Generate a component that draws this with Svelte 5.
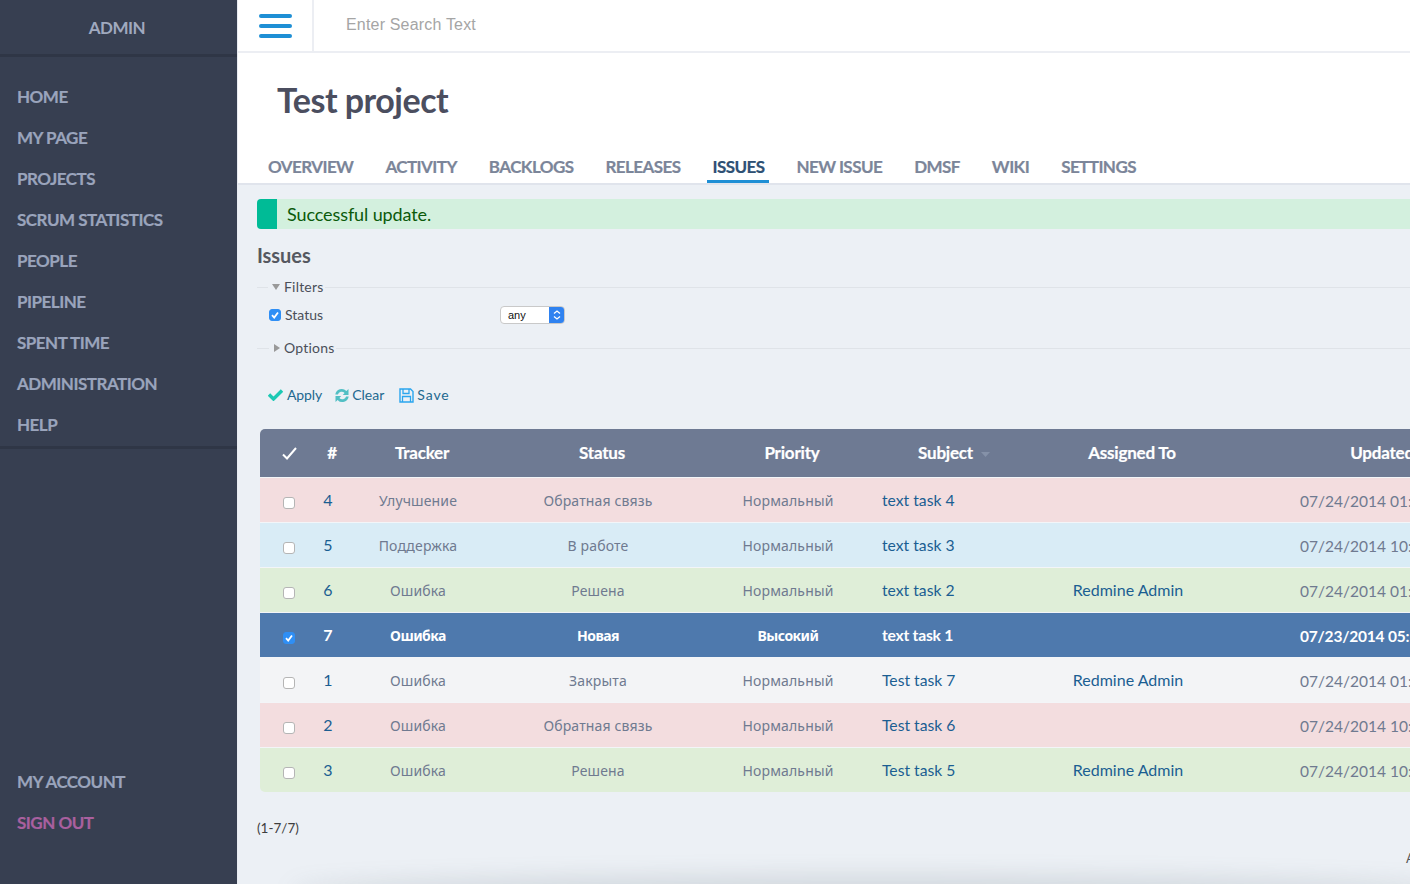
<script>
  const nav = ['Home', 'My page', 'Projects', 'Scrum statistics', 'People', 'Pipeline', 'Spent time', 'Administration', 'Help'];
  const tabs = ['Overview', 'Activity', 'Backlogs', 'Releases', 'Issues', 'New issue', 'DMSF', 'Wiki', 'Settings'];
  const rows = [
    { id: 4, tracker: 'Улучшение', status: 'Обратная связь', priority: 'Нормальный', subject: 'text task 4', who: '', date: '07/24/2014 01:32 PM', tone: 'red' },
    { id: 5, tracker: 'Поддержка', status: 'В работе', priority: 'Нормальный', subject: 'text task 3', who: '', date: '07/24/2014 10:45 AM', tone: 'blue' },
    { id: 6, tracker: 'Ошибка', status: 'Решена', priority: 'Нормальный', subject: 'text task 2', who: 'Redmine Admin', date: '07/24/2014 01:32 PM', tone: 'green' },
    { id: 7, tracker: 'Ошибка', status: 'Новая', priority: 'Высокий', subject: 'text task 1', who: '', date: '07/23/2014 05:12 PM', tone: 'sel' },
    { id: 1, tracker: 'Ошибка', status: 'Закрыта', priority: 'Нормальный', subject: 'Test task 7', who: 'Redmine Admin', date: '07/24/2014 01:32 PM', tone: 'plain' },
    { id: 2, tracker: 'Ошибка', status: 'Обратная связь', priority: 'Нормальный', subject: 'Test task 6', who: '', date: '07/24/2014 10:45 AM', tone: 'red' },
    { id: 3, tracker: 'Ошибка', status: 'Решена', priority: 'Нормальный', subject: 'Test task 5', who: 'Redmine Admin', date: '07/24/2014 10:45 AM', tone: 'green' }
  ];
</script>

<div class="page">
  <aside class="side">
    <div class="brand">ADMIN</div>
    <nav class="primary">
      {#each nav as item}<a href="#top">{item}</a>{/each}
    </nav>
    <nav class="secondary">
      <a href="#top">My account</a>
      <a href="#top" class="out">Sign out</a>
    </nav>
  </aside>

  <main class="main">
    <header class="topbar">
      <div class="burger"><i></i><i></i><i></i></div>
      <div class="search">Enter Search Text</div>
    </header>

    <section class="project">
      <h1>Test project</h1>
      <div class="tabs">
        {#each tabs as t}<a href="#top" class:active={t === 'Issues'}>{t}</a>{/each}
      </div>
    </section>

    <section class="content">
      <div class="flash"><span>Successful update.</span></div>
      <h2>Issues</h2>

      <div class="legend filters">
        <b class="stub"></b><svg class="tri" width="8" height="6" viewBox="0 0 8 6"><path d="M0 0h8L4 6z" fill="#999"/></svg><span>Filters</span><b class="rule"></b>
      </div>
      <div class="filter-row">
        <span class="cb on"><svg width="10" height="10" viewBox="0 0 10 10"><path d="M2 5.2 4.2 7.5 8 2.5" fill="none" stroke="#fff" stroke-width="1.8"/></svg></span>
        <span class="flabel">Status</span>
        <div class="select"><span>any</span><em><svg width="8" height="12" viewBox="0 0 8 12"><path d="M1 4.5 4 2l3 2.5M1 7.5 4 10l3-2.5" fill="none" stroke="#fff" stroke-width="1.3"/></svg></em></div>
      </div>
      <div class="legend options">
        <b class="stub long"></b><svg class="tri" width="6" height="8" viewBox="0 0 6 8"><path d="M0 0l6 4-6 4z" fill="#999"/></svg><span>Options</span><b class="rule"></b>
      </div>

      <div class="actions">
        <a href="#top" class="apply">
          <svg width="15" height="12" viewBox="0 0 15 12"><path d="M1 5.5 5.5 10 14 1.5" fill="none" stroke="#1cc9b4" stroke-width="3.4"/></svg>Apply
        </a>
        <a href="#top" class="clear">
          <svg width="16" height="15" viewBox="0 0 15 15"><path d="M.8 6.5A6.4 6.4 0 0 1 11.9 3.1L14 1.1V6.9H8.3L10.1 5A3.9 3.9 0 0 0 3.4 6.5zM14.2 8.5A6.4 6.4 0 0 1 3.1 11.9L1 13.9V8.1H6.7L4.9 10A3.9 3.9 0 0 0 11.6 8.5z" fill="#52bfc4"/></svg>Clear
        </a>
        <a href="#top" class="save">
          <svg width="15" height="15" viewBox="0 0 15 15"><path d="M1 1h10.5L14 3.5V14H1z" fill="none" stroke="#2aa5ee" stroke-width="1.4"/><path d="M4 1v4.5h6V1M3.5 14V8.5h8V14" fill="none" stroke="#2aa5ee" stroke-width="1.3"/></svg>Save
        </a>
      </div>

      <table class="issues">
        <colgroup>
          <col class="c-check" /><col class="c-id" /><col class="c-tracker" /><col class="c-status" /><col class="c-priority" /><col class="c-subject" /><col class="c-who" /><col class="c-date" />
        </colgroup>
        <thead>
          <tr>
            <th class="h-check"><svg width="15" height="13" viewBox="0 0 15 13"><path d="M1 7.5 5 11.5 14 1" fill="none" stroke="#fff" stroke-width="2"/></svg></th>
            <th class="h-id">#</th>
            <th>Tracker</th>
            <th>Status</th>
            <th>Priority</th>
            <th class="h-subject">Subject<svg width="9" height="5" viewBox="0 0 9 5"><path d="M0 0h9L4.5 5z" fill="#8591a8"/></svg></th>
            <th>Assigned To</th>
            <th>Updated</th>
          </tr>
        </thead>
        <tbody>
          {#each rows as r}
            <tr class={r.tone}>
              <td class="d-check">
                {#if r.tone === 'sel'}
                  <span class="cb on"><svg width="10" height="10" viewBox="0 0 10 10"><path d="M2 5.2 4.2 7.5 8 2.5" fill="none" stroke="#fff" stroke-width="1.8"/></svg></span>
                {:else}
                  <span class="cb"></span>
                {/if}
              </td>
              <td class="d-id"><a href="#top">{r.id}</a></td>
              <td class="ru">{r.tracker}</td>
              <td class="ru">{r.status}</td>
              <td class="ru">{r.priority}</td>
              <td class="d-subject"><a href="#top">{r.subject}</a></td>
              <td class="d-who"><a href="#top">{r.who}</a></td>
              <td class="d-date">{r.date}</td>
            </tr>
          {/each}
        </tbody>
      </table>

      <div class="count">(1-7/7)</div>
      <div class="also">Also available in</div>
    </section>
    <div class="shade"></div>
  </main>
</div>

<style>
  :global(body) { margin: 0; background: #ecf0f5; }
  .page {
    display: flex;
    height: 884px;
    overflow: hidden;
    font-family: Lato, "Noto Sans", sans-serif;
  }
  a { text-decoration: none; }

  .side {
    flex: 0 0 237px;
    display: flex;
    flex-direction: column;
    background: #373f51;
  }
  .brand {
    height: 57px;
    box-sizing: border-box;
    padding-top: 17px;
    padding-right: 3px;
    text-align: center;
    font-size: 17px;
    line-height: 22px;
    font-weight: 700;
    letter-spacing: -0.5px;
    color: #a0a9bf;
    border-bottom: 3px solid #2f3646;
  }
  .primary {
    display: flex;
    flex-direction: column;
    padding: 20px 0 0;
    border-bottom: 3px solid #2f3646;
  }
  .side a {
    display: block;
    height: 41px;
    line-height: 40px;
    padding-left: 17px;
    font-size: 17px;
    font-weight: 700;
    letter-spacing: -0.5px;
    -webkit-text-stroke: 0.2px currentColor;
    text-transform: uppercase;
    color: #9aa4bc;
  }
  .secondary { margin-top: auto; padding-bottom: 40px; }
  .side a.out { color: #a9609f; }

  .main {
    position: relative;
    flex: 1;
    min-width: 0;
    overflow: hidden;
    border-left: 1px solid #e8ebf1;
  }
  .topbar {
    display: flex;
    height: 51px;
    background: #fff;
    border-bottom: 2px solid #eceef3;
  }
  .burger {
    width: 76px;
    box-sizing: border-box;
    padding: 14px 20px 0 21px;
    border-right: 2px solid #eceef3;
  }
  .burger i {
    display: block;
    height: 4px;
    margin-bottom: 6px;
    border-radius: 2px;
    background: #1e8fd5;
  }
  .search {
    padding: 16px 0 0 32px;
    font-family: "Liberation Sans", sans-serif;
    font-size: 16px;
    line-height: 18px;
    letter-spacing: 0.18px;
    color: #a5a5a5;
  }

  .project {
    height: 132px;
    box-sizing: border-box;
    padding: 26px 0 0 25px;
    background: #fff;
    border-bottom: 2px solid #e0e4ec;
  }
  h1 {
    margin: 0 0 0 14px;
    font-size: 34px;
    line-height: 42px;
    font-weight: 700;
    letter-spacing: -0.5px;
    color: #4b4e5f;
  }
  .tabs {
    display: flex;
    gap: 22px;
    margin-top: 32px;
  }
  .tabs a {
    height: 30px;
    box-sizing: border-box;
    padding: 3px 5px 0;
    font-size: 17px;
    line-height: 22px;
    font-weight: 700;
    letter-spacing: -0.57px;
    -webkit-text-stroke: 0.2px currentColor;
    text-transform: uppercase;
    color: #7b8599;
  }
  .tabs a.active {
    color: #2e5074;
    border-bottom: 3px solid #1e8fd5;
  }

  .content {
    padding: 14px 0 0 19px;
    background: #ecf0f5;
  }
  .flash {
    height: 30px;
    box-sizing: border-box;
    padding-left: 10px;
    border-left: 20px solid #00bb96;
    border-radius: 4px 0 0 4px;
    background: #d3f0de;
    font-size: 18px;
    line-height: 30px;
    letter-spacing: -0.1px;
    color: #0b5a0b;
  }
  h2 {
    margin: 13px 0 0;
    font-size: 20px;
    line-height: 26px;
    font-weight: 700;
    letter-spacing: -0.05px;
    color: #555860;
  }
  .legend {
    display: flex;
    align-items: center;
    font-size: 14px;
    line-height: 18px;
    letter-spacing: 0.2px;
    color: #4a4f59;
  }
  .filters { margin-top: 10px; }
  .options { margin-top: 12px; }
  .stub { width: 11px; height: 1px; background: #dfe3e8; margin-right: 4px; }
  .stub.long { width: 12px; margin-right: 5px; }
  .tri { margin-right: 4px; }
  .rule { flex: 1; height: 1px; background: #dfe3e8; margin-left: 2px; }

  .filter-row {
    display: flex;
    align-items: center;
    height: 24px;
    margin-top: 7px;
    padding-left: 12px;
    font-size: 14px;
    color: #4a4f59;
  }
  .flabel { margin-left: 4px; width: 215px; line-height: 22px; }
  .cb {
    display: inline-flex;
    align-items: center;
    justify-content: center;
    width: 10px;
    height: 10px;
    box-sizing: content-box;
    border: 1px solid #b5b5b5;
    border-radius: 3px;
    background: #fff;
    vertical-align: middle;
  }
  .cb.on { background: #2f8ff5; border-color: #2f8ff5; }
  .select {
    display: flex;
    width: 65px;
    height: 18px;
    box-sizing: border-box;
    border: 1px solid #c9c9c9;
    border-radius: 4px;
    background: #fff;
    overflow: hidden;
    font-family: "Liberation Sans", sans-serif;
    font-size: 11px;
    line-height: 16px;
    color: #111;
  }
  .select span { flex: 1; padding-left: 7px; }
  .select em {
    display: flex;
    align-items: center;
    justify-content: center;
    width: 15px;
    background: #2f82f0;
  }

  .actions {
    display: flex;
    margin-top: 28px;
    padding-left: 11px;
    height: 20px;
    font-size: 14px;
    line-height: 20px;
  }
  .actions a {
    display: flex;
    align-items: center;
    color: #22688f;
  }
  .actions svg { margin-right: 3px; }
  .apply { margin-right: 12px; letter-spacing: -0.1px; }
  .apply svg { margin-right: 4px; }
  .clear { margin-right: 15px; }
  .clear svg { margin-right: 2px; }
  .save { letter-spacing: 0.9px; }

  .issues {
    margin: 24px 0 0 3px;
    width: 1258px;
    table-layout: fixed;
    border-collapse: separate;
    border-spacing: 0;
  }
  .c-check { width: 58px; }
  .c-id { width: 20px; }
  .c-tracker { width: 160px; }
  .c-status { width: 200px; }
  .c-priority { width: 180px; }
  .c-subject { width: 140px; }
  .c-who { width: 220px; }
  .c-date { width: 280px; }
  th {
    height: 48px;
    padding: 0 0 2px 8px;
    box-sizing: border-box;
    background: #6e7a93;
    color: #fff;
    font-size: 17px;
    font-weight: 700;
    letter-spacing: -0.2px;
    -webkit-text-stroke: 0.2px currentColor;
    text-align: center;
    white-space: nowrap;
  }
  th:first-child { border-top-left-radius: 5px; }
  .h-check { padding: 0; }
  .h-subject { padding: 0 0 2px 12px; }
  .h-subject svg { margin: 0 0 2px 8px; }
  td {
    height: 45px;
    box-sizing: border-box;
    padding: 1px 0 0;
    border-top: 1px solid #f3f5f8;
    text-align: center;
    font-size: 14px;
    color: #6f7a90;
    white-space: nowrap;
  }
  tbody tr:last-child td:first-child { border-bottom-left-radius: 5px; }
  td a { color: #1b5e92; }
  .ru { font-family: "Noto Sans", sans-serif; letter-spacing: 0.15px; }
  .d-check { padding-top: 2px; }
  .d-id { font-size: 16px; padding: 0 0 1px; }
  .d-subject { text-align: left; padding: 0 0 1px 4px; font-size: 15.7px; }
  .d-who { font-size: 16px; padding: 0 0 1px; }
  .d-date { text-align: left; padding: 1px 0 0 62px; font-size: 15.5px; }
  tr.red td { background: #f3dddf; }
  tr.blue td { background: #d9ecf6; }
  tr.green td { background: #dfeed8; }
  tr.plain td { background: #f3f4f6; }
  tr.sel td { background: #4e79ad; color: #fff; font-weight: 700; }
  tr.sel td a { color: #fff; }
  tr.sel .ru { letter-spacing: -0.55px; }
  tr.sel .d-subject { letter-spacing: -0.25px; }
  tr.sel .d-date { letter-spacing: -0.2px; }

  .count {
    margin-top: 27px;
    font-size: 13.5px;
    line-height: 18px;
    color: #3e3e3e;
  }
  .also {
    margin: 12px 0 0 1149px;
    width: 200px;
    font-size: 13px;
    line-height: 18px;
    color: #555;
    white-space: nowrap;
  }
  .shade {
    position: absolute;
    left: 60px;
    right: -40px;
    bottom: -14px;
    height: 14px;
    border-radius: 50%;
    box-shadow: 0 0 22px 8px rgba(120, 130, 140, 0.22);
  }
</style>
